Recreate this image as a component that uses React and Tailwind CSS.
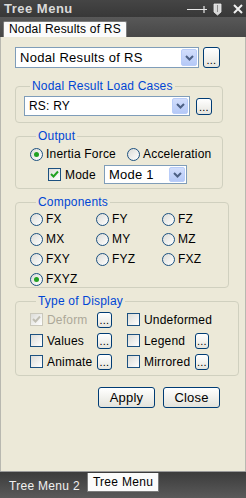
import React from "react";

const font = { fontFamily: '"Liberation Sans", Arial, sans-serif' };

function Chevron() {
  return (
    <svg width="9" height="6" viewBox="0 0 9 6">
      <path d="M1 1 L4.5 4.5 L8 1" fill="none" stroke="#4d6185" strokeWidth="2" />
    </svg>
  );
}

function Select({ value, className }) {
  return (
    <div className={`flex items-center bg-white border border-[#7f9db9] ${className}`}>
      <span className="flex-1 pl-[4px] truncate">{value}</span>
      <span className="w-[16px] self-stretch m-[1px] rounded-[2px] border border-[#b9cdf9] bg-gradient-to-b from-[#d2defc] to-[#b5c9f7] flex items-center justify-center">
        <Chevron />
      </span>
    </div>
  );
}

function Dots({ className = "" }) {
  return (
    <div className={`border border-[#003c74] rounded-[3px] bg-gradient-to-b from-white to-[#e6e5de] flex items-end justify-center leading-[10px] pb-[2px] text-[11px] ${className}`}>
      ...
    </div>
  );
}

function Radio({ checked, label, className = "" }) {
  return (
    <div className={`flex items-center gap-[3px] ${className}`}>
      <span className="w-[13px] h-[13px] rounded-full border border-[#1c5180] bg-gradient-to-br from-[#dcdcd7] to-white flex items-center justify-center shrink-0">
        {checked && <span className="w-[5px] h-[5px] rounded-full bg-[#21a121]" />}
      </span>
      <span>{label}</span>
    </div>
  );
}

function Check({ checked, label, disabled, className = "" }) {
  return (
    <div className={`flex items-center gap-[4px] ${className}`}>
      <span
        className={`w-[13px] h-[13px] border flex items-center justify-center shrink-0 bg-gradient-to-br from-[#dcdcd7] to-white ${
          disabled ? "border-[#cac8bb]" : "border-[#1c5180]"
        }`}
      >
        {checked && (
          <svg width="9" height="9" viewBox="0 0 9 9">
            <path d="M1 4 L3.5 6.5 L8 1.5" fill="none" stroke={disabled ? "#c0beb2" : "#21a121"} strokeWidth="2" />
          </svg>
        )}
      </span>
      <span className={disabled ? "text-[#aca899]" : ""}>{label}</span>
    </div>
  );
}

function Group({ title, className = "", children }) {
  return (
    <fieldset className={`border border-[#d0d0bf] rounded-[4px] w-[208px] ${className}`}>
      <legend className="ml-[6px] px-[2px] text-[#0046d5] leading-[14px]">{title}</legend>
      {children}
    </fieldset>
  );
}

export default function App() {
  return (
    <div style={font} className="w-[246px] h-[498px] flex flex-col text-[12px] tracking-[0.2px] text-black overflow-hidden">
      {/* title bar */}
      <div className="h-[17px] bg-gradient-to-b from-[#454545] to-[#383838] flex items-center pl-[4px] pr-[3px]">
        <span className="font-bold text-[13px] text-[#dadada] tracking-[0.5px] flex-1 leading-[17px]">Tree Menu</span>
        <svg width="36" height="14" viewBox="0 0 36 14" className="mr-[10px]">
          <path d="M0 7.5 H20 M17 4 V11" stroke="#e8e8e8" strokeWidth="1.2" fill="none" />
          <path d="M27 2 H34 V10 L30.5 13 L27 10 Z" fill="#d8d8d8" stroke="#f0f0f0" strokeWidth="0.8" />
          <path d="M30.5 3 V10" stroke="#8a8a8a" strokeWidth="1" />
        </svg>
        <svg width="10" height="10" viewBox="0 0 10 10">
          <path d="M1 1 L9 9 M9 1 L1 9" stroke="#f0f0f0" strokeWidth="2" />
        </svg>
      </div>
      {/* tab strip */}
      <div className="h-[20px] bg-gradient-to-b from-[#585858] to-[#474747] flex items-end pl-[3px]">
        <div className="h-[16px] bg-[#fbfbfb] border border-b-0 border-[#7c7c7c] rounded-t-[2px] px-[5px] leading-[15px]">
          Nodal Results of RS
        </div>
      </div>
      {/* content */}
      <div className="flex-1 bg-[#ece9d8] border-x border-[#b8b8b0] pl-[14px] pt-[10px] flex flex-col">
        <div className="flex items-center gap-[4px]">
          <Select value="Nodal Results of RS" className="w-[184px] h-[21px] text-[13px] tracking-[0.3px]" />
          <Dots className="w-[17px] h-[21px]" />
        </div>

        <Group title="Nodal Result Load Cases" className="mt-[11px] h-[44px] pl-[8px] pt-[3px]">
          <div className="flex items-center gap-[6px]">
            <Select value="RS: RY" className="w-[166px] h-[20px]" />
            <Dots className="w-[16px] h-[17px]" />
          </div>
        </Group>

        <Group title="Output" className="mt-[6px] h-[60px] pl-[14px] pt-[4px]">
          <div className="flex items-center h-[14px]">
            <Radio checked label="Inertia Force" className="w-[97px]" />
            <Radio label="Acceleration" />
          </div>
          <div className="flex items-center mt-[4px] pl-[18px]">
            <Check checked label="Mode" className="w-[56px]" />
            <Select value="Mode 1" className="w-[83px] h-[19px] text-[13px]" />
          </div>
        </Group>

        <Group title="Components" className="mt-[6px] h-[93px] pl-[14px] pt-[0px]">
          <div className="grid grid-cols-[66px_66px_66px] auto-rows-[20px] items-center">
            <Radio label="FX" />
            <Radio label="FY" />
            <Radio label="FZ" />
            <Radio label="MX" />
            <Radio label="MY" />
            <Radio label="MZ" />
            <Radio label="FXY" />
            <Radio label="FYZ" />
            <Radio label="FXZ" />
            <Radio checked label="FXYZ" />
          </div>
        </Group>

        <Group title="Type of Display" className="mt-[6px] h-[82px] pl-[14px] pt-[1px]">
          <div className="grid grid-cols-[97px_111px] auto-rows-[21px] items-center">
            <div className="flex items-center">
              <Check checked disabled label="Deform" className="w-[67px]" />
              <Dots className="w-[15px] h-[16px]" />
            </div>
            <Check label="Undeformed" />
            <div className="flex items-center">
              <Check label="Values" className="w-[67px]" />
              <Dots className="w-[15px] h-[16px]" />
            </div>
            <div className="flex items-center">
              <Check label="Legend" className="w-[68px]" />
              <Dots className="w-[14px] h-[16px]" />
            </div>
            <div className="flex items-center">
              <Check label="Animate" className="w-[67px]" />
              <Dots className="w-[15px] h-[16px]" />
            </div>
            <div className="flex items-center">
              <Check label="Mirrored" className="w-[68px]" />
              <Dots className="w-[14px] h-[16px]" />
            </div>
          </div>
        </Group>

        <div className="flex gap-[8px] mt-[11px] pl-[83px]">
          <div className="w-[57px] h-[21px] border border-[#003c74] rounded-[3px] bg-gradient-to-b from-white to-[#e3e3db] flex items-center justify-center text-[13px]">
            Apply
          </div>
          <div className="w-[57px] h-[21px] border border-[#003c74] rounded-[3px] bg-gradient-to-b from-white to-[#e3e3db] flex items-center justify-center text-[13px]">
            Close
          </div>
        </div>
      </div>
      {/* bottom bar */}
      <div className="h-[27px] bg-gradient-to-b from-[#3c3c3c] to-[#5a5a5a] border-t border-[#9a9a9a] flex items-start pl-[9px]">
        <span className="text-[#f0f0f0] mt-[5px] mr-[7px] tracking-[0.3px]">Tree Menu 2</span>
        <div className="h-[19px] mt-[1px] bg-[#fbfbfb] border border-t-0 border-[#7c7c7c] px-[5px] leading-[18px] tracking-[0.3px]">
          Tree Menu
        </div>
      </div>
    </div>
  );
}
